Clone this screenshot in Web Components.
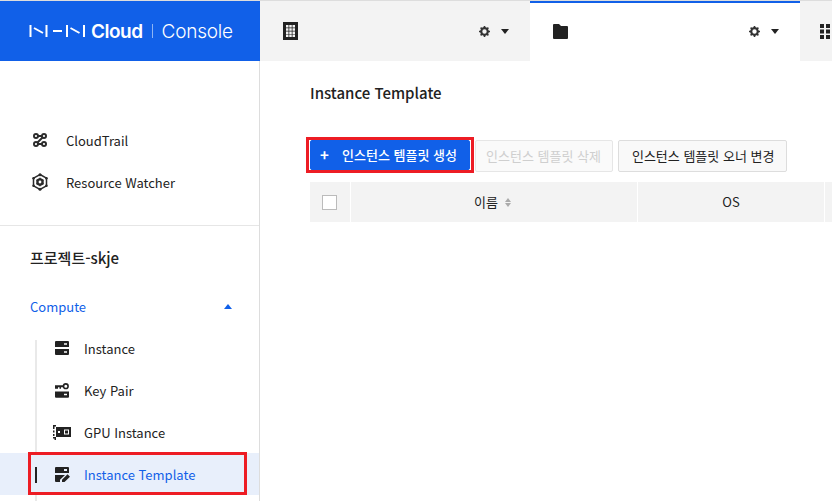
<!DOCTYPE html>
<html lang="ko">
<head>
<meta charset="utf-8">
<title>NHN Cloud Console</title>
<style>
  html, body { margin: 0; height: 100%; overflow: hidden; background: #fff; }
  body { font-family: "Noto Sans CJK KR", "Noto Sans", sans-serif; font-size: 13px; color: #222; }
  console-app { width: 832px; height: 501px; }
</style>
</head>
<body>
<console-app>
  <console-logo slot="logo"></console-logo>
  <console-tab slot="tabs" icon="org"></console-tab>
  <console-tab slot="tabs" icon="folder" active></console-tab>
  <console-tab slot="tabs" icon="grid" bare></console-tab>

  <nav-item slot="nav" icon="trail">CloudTrail</nav-item>
  <nav-item slot="nav" icon="watcher">Resource Watcher</nav-item>
  <nav-project slot="nav">프로젝트-skje</nav-project>
  <nav-group slot="nav" label="Compute">
    <nav-item sub icon="server">Instance</nav-item>
    <nav-item sub icon="key">Key Pair</nav-item>
    <nav-item sub icon="gpu">GPU Instance</nav-item>
    <nav-item sub active marked icon="template">Instance Template</nav-item>
  </nav-group>

  <page-title slot="main">Instance Template</page-title>
  <tool-bar slot="main">
    <ui-button variant="primary" marked>인스턴스 템플릿 생성</ui-button>
    <ui-button disabled>인스턴스 템플릿 삭제</ui-button>
    <ui-button>인스턴스 템플릿 오너 변경</ui-button>
  </tool-bar>
  <table-head slot="main"></table-head>
</console-app>

<script>
// Inline svg icons, all drawn on their own small viewBox
const ICONS = {
  org: '<svg width="15" height="18" viewBox="0 0 15 18"><path fill="#222" fill-rule="evenodd" d="M0 0h15v18H0z M3 3v2.500h2.500V3z M6.250 3v2.500h2.500V3z M9.500 3v2.500H12V3z M3 6.200v2.500h2.500V6.200z M6.250 6.200v2.500h2.500V6.200z M9.500 6.200v2.500H12V6.200z M3 9.400v2.500h2.500V9.400z M6.250 9.400v2.500h2.500V9.400z M9.500 9.400v2.500H12V9.400z M3 12.600v2.500h2.500v-2.500z M6.250 12.600v2.500h2.500v-2.500z M9.500 12.600v2.500H12v-2.500z"/></svg>',
  folder: '<svg width="15" height="15" viewBox="0 0 15 15"><path fill="#222" d="M0 1q0-1 1-1h5l2 2h6q1 0 1 1v11q0 1-1 1H1q-1 0-1-1z"/></svg>',
  grid: '<svg width="16" height="15" viewBox="0 0 16 15"><path fill="#222" d="M0 0h4v4H0zM6 0h4v4H6zM12 0h4v4h-4zM0 5.500h4v4H0zM6 5.500h4v4H6zM12 5.500h4v4h-4zM0 11h4v4H0zM6 11h4v4H6zM12 11h4v4h-4z"/></svg>',
  gear: '<svg width="11" height="11" viewBox="0 0 11 11"><circle cx="5.500" cy="5.500" r="3.300" fill="none" stroke="#333" stroke-width="2.200"/><path stroke="#333" stroke-width="1.600" d="M5.500 0v2M5.500 9v2M0 5.500h2M9 5.500h2M1.600 1.600l1.400 1.400M8 8l1.400 1.400M9.400 1.600L8 3M3 8L1.600 9.400"/></svg>',
  trail: '<svg width="14" height="14" viewBox="0 0 14 14"><g fill="none" stroke="#2b2b2b" stroke-width="1.900"><circle cx="3" cy="3" r="2.050"/><circle cx="11" cy="3" r="2.050"/><circle cx="3" cy="11" r="2.050"/><circle cx="11" cy="11" r="2.050"/><path d="M5 3h4M5 11h4M9.500 4.500l-5 5"/></g></svg>',
  watcher: '<svg width="16" height="18" viewBox="0 0 16 18"><path fill="none" stroke="#2b2b2b" stroke-width="1.500" d="M8 1.500l6.500 3.700v7.600L8 16.500l-6.500-3.700V5.200z"/><circle cx="8" cy="1.800" r="1.500" fill="#2b2b2b"/><circle cx="8" cy="16.200" r="1.500" fill="#2b2b2b"/><circle cx="1.600" cy="5.200" r="1.300" fill="#2b2b2b"/><circle cx="14.400" cy="5.200" r="1.300" fill="#2b2b2b"/><circle cx="1.600" cy="12.800" r="1.300" fill="#2b2b2b"/><circle cx="14.400" cy="12.800" r="1.300" fill="#2b2b2b"/><circle cx="8" cy="9" r="2.600" fill="none" stroke="#2b2b2b" stroke-width="2.400"/><path stroke="#2b2b2b" stroke-width="1.500" d="M8 4.800v1.700M8 11.500v1.700M4.400 6.900l1.400.8M10.200 10.300l1.400.8M11.600 6.900l-1.400.8M5.800 10.300l-1.400.8"/></svg>',
  server: '<svg width="14" height="14" viewBox="0 0 14 14"><path fill="#222" fill-rule="evenodd" d="M0 1q0-1 1-1h12q1 0 1 1v5H0z M9 2.200v1.600h3V2.200z M0 8h14v5q0 1-1 1H1q-1 0-1-1z M9 10.200v1.600h3v-1.600z"/></svg>',
  key: '<svg width="14" height="15" viewBox="0 0 14 15"><circle cx="10.800" cy="3.200" r="2.300" fill="none" stroke="#222" stroke-width="1.600"/><path fill="#222" d="M0 2.300h8v2H6v1.500H4.500V4.300H3v1.500H0z"/><path fill="#222" fill-rule="evenodd" d="M0 8.500h14v5.300q0 1-1 1H1q-1 0-1-1z M9 10.700v1.600h3v-1.600z"/></svg>',
  gpu: '<svg width="18" height="15" viewBox="0 0 18 15"><path fill="#222" fill-rule="evenodd" d="M3 2h15v10H3z M11 4.500v5h5v-5z M5 6v2h2V6z"/><path fill="#222" d="M0 0h3v1.500H1.500V4H0zM0 5.500h1.500v2H0zM0 9h1.500v2H0zM0 12h3v3H1.500v-1.500H0zM12 5.500h3v3h-3z"/></svg>',
  template: '<svg width="16" height="15" viewBox="0 0 16 15"><path fill="#222" fill-rule="evenodd" d="M0 1q0-1 1-1h12q1 0 1 1v5H0z M9 2v2h3V2z"/><path fill="#222" d="M0 8h10L5 12.700V15H1q-1 0-1-1zM7 15v-2.200l5.500-5.500 2.500 2.500L9.500 15z"/></svg>'
};

class ConsoleApp extends HTMLElement {
  constructor() {
    super();
    this.attachShadow({ mode: 'open' });
    this.shadowRoot.innerHTML = `
      <style>
        :host { display: grid; grid-template-columns: 260px 1fr; grid-template-rows: 60px 1fr; overflow: hidden; border-top: 1px solid #ddd; box-sizing: border-box; }
        .tabs { display: flex; background: #f3f3f3; overflow: hidden; min-width: 0; }
        .side { border-right: 1px solid #ddd; overflow: hidden; padding-top: 58px; box-sizing: border-box; }
        .main { padding: 20px 0 0 50px; overflow: hidden; min-width: 0; }
      </style>
      <slot name="logo"></slot>
      <div class="tabs"><slot name="tabs"></slot></div>
      <div class="side"><slot name="nav"></slot></div>
      <div class="main"><slot name="main"></slot></div>
    `;
  }
}

class ConsoleLogo extends HTMLElement {
  constructor() {
    super();
    this.attachShadow({ mode: 'open' });
    this.shadowRoot.innerHTML = `
      <style>
        :host { display: flex; align-items: center; background: #1160e8; color: #fff; padding-left: 29px; }
        svg { display: block; margin-right: 5px; }
        .brand { font-family: Inter, sans-serif; font-size: 19px; font-weight: 600; letter-spacing: -0.5px; }
        .sep { width: 1px; height: 14px; background: #8db4f4; margin: 0 9px; }
        .name { font-family: Inter, sans-serif; font-size: 19px; font-weight: 300; letter-spacing: -0.2px; }
      </style>
      <svg width="57" height="14" viewBox="0 0 57 14" fill="none" stroke="#fff" stroke-width="2">
        <path d="M1.500 1v12M5 4l9 5M17.500 1v12M24 7h9M38 1v12M41.500 4l9 5M55 1v12"/>
      </svg>
      <span class="brand">Cloud</span><span class="sep"></span><span class="name">Console</span>
    `;
  }
}

class ConsoleTab extends HTMLElement {
  constructor() {
    super();
    this.attachShadow({ mode: 'open' });
    const icon = ICONS[this.getAttribute('icon')];
    const tools = this.hasAttribute('bare') ? '' : `
      <span class="tools">${ICONS.gear}<i class="caret"></i></span>`;
    this.shadowRoot.innerHTML = `
      <style>
        :host { display: flex; flex: none; width: 270px; box-sizing: border-box; align-items: center; justify-content: space-between; padding: 0 21px 2px 23px; height: 60px; border-top: 2px solid transparent; }
        :host([active]) { background: #fff; border-top-color: #1160e8; }
        :host([bare]) { width: auto; padding: 0 0 2px 20px; }
        svg { display: block; }
        .tools { display: flex; align-items: center; gap: 11px; }
        .caret { width: 0; height: 0; border: 4px solid transparent; border-top: 5px solid #222; border-bottom: 0; }
      </style>
      ${icon}${tools}
    `;
  }
}

class NavItem extends HTMLElement {
  constructor() {
    super();
    this.attachShadow({ mode: 'open' });
    const mark = this.hasAttribute('marked') ? '<span class="mark"></span>' : '';
    this.shadowRoot.innerHTML = `
      <style>
        :host { display: flex; align-items: center; position: relative; height: 42px; padding-left: 33px; font-size: 13px; color: #222; }
        :host([sub]) { padding-left: 55px; }
        .ico { width: 33px; flex: none; display: flex; align-items: center; }
        :host([sub]) .ico { width: 29px; }
        :host([icon=gpu]) svg { margin-left: -2px; }
        :host([icon=watcher]) svg { margin-left: -1px; }
        :host([active]) { background: #e8effb; color: #1160e8; }
        :host([active])::before { content: ""; position: absolute; left: 35px; top: 14px; height: 16px; width: 2px; background: #222; }
        svg { display: block; }
        .mark { position: absolute; left: 28px; right: 12px; top: -1px; bottom: 0; border: 3px solid #ed1c24; pointer-events: none; }
      </style>
      <span class="ico">${ICONS[this.getAttribute('icon')]}</span><slot></slot>${mark}
    `;
  }
}

class NavProject extends HTMLElement {
  constructor() {
    super();
    this.attachShadow({ mode: 'open' });
    this.shadowRoot.innerHTML = `
      <style>
        :host { display: block; margin-top: 22px; border-top: 1px solid #e6e6e6; padding: 20px 0 0 30px; height: 32px; line-height: 24px; font-size: 15px; font-weight: 500; color: #222; }
      </style>
      <slot></slot>
    `;
  }
}

class NavGroup extends HTMLElement {
  constructor() {
    super();
    this.attachShadow({ mode: 'open' });
    this.shadowRoot.innerHTML = `
      <style>
        :host { display: block; margin-top: 7px; }
        .head { display: flex; align-items: center; justify-content: space-between; height: 42px; padding: 0 27px 0 30px; font-size: 13px; color: #1160e8; }
        .caret { width: 0; height: 0; border: 4px solid transparent; border-bottom: 5px solid #1160e8; border-top: 0; }
        .list { position: relative; }
        .list::before { content: ""; position: absolute; left: 35px; top: 13px; bottom: -10px; width: 2px; background: #e9e9e9; }
      </style>
      <div class="head"><span>${this.getAttribute('label')}</span><i class="caret"></i></div>
      <div class="list"><slot></slot></div>
    `;
  }
}

class PageTitle extends HTMLElement {
  constructor() {
    super();
    this.attachShadow({ mode: 'open' });
    this.shadowRoot.innerHTML = `
      <style>
        :host { display: block; height: 24px; line-height: 24px; font-size: 15px; font-weight: 500; color: #222; }
      </style>
      <slot></slot>
    `;
  }
}

class ToolBar extends HTMLElement {
  constructor() {
    super();
    this.attachShadow({ mode: 'open' });
    this.shadowRoot.innerHTML = `
      <style>
        :host { display: flex; align-items: flex-start; gap: 5px; margin-top: 35px; width: 522px; height: 32px; }
      </style>
      <slot></slot>
    `;
  }
}

class UiButton extends HTMLElement {
  constructor() {
    super();
    this.attachShadow({ mode: 'open' });
    const primary = this.getAttribute('variant') === 'primary';
    this.shadowRoot.innerHTML = `
      <style>
        :host { display: inline-flex; flex: none; position: relative; align-items: center; height: 32px; box-sizing: border-box; padding: 0 12px 2px 13px; white-space: nowrap; font-size: 13px; color: #222; background: #f9f9f9; border: 1px solid #ddd; border-radius: 2px; }
        :host([disabled]) { color: #cfcfcf; border-color: #e6e6e6; background: #fafafa; padding: 0 11px 2px 10px; }
        :host([variant=primary]) { background: #1160e8; border-color: #1160e8; color: #fff; font-weight: 500; padding: 0 0 1px 9px; height: 30px; width: 160px; }
        .plus { width: 22px; flex: none; font-size: 15px; line-height: 1; font-weight: 700; }
        .mark { position: absolute; left: -5px; right: -5px; top: -4px; bottom: -4px; border: 3px solid #ed1c24; }
      </style>
      ${primary ? '<span class="plus">+</span>' : ''}<slot></slot>${this.hasAttribute('marked') ? '<span class="mark"></span>' : ''}
    `;
  }
}

class TableHead extends HTMLElement {
  constructor() {
    super();
    this.attachShadow({ mode: 'open' });
    this.shadowRoot.innerHTML = `
      <style>
        :host { display: grid; grid-template-columns: 40px 286px 186px 60px; gap: 1px; margin-top: 10px; height: 40px; font-size: 13px; color: #222; width: 575px; }
        .cell { background: #f3f3f3; display: flex; align-items: center; justify-content: center; gap: 7px; padding-bottom: 2px; box-sizing: border-box; }
        .cell.name { padding-right: 3px; }
        .check { width: 15px; height: 15px; box-sizing: border-box; border: 1px solid #bbb; background: #fff; margin: 2px 0 0 -1px; }
        .sort { display: flex; flex-direction: column; gap: 1px; margin-top: 2px; }
        .sort i { width: 0; height: 0; border: 3px solid transparent; }
        .sort i:first-child { border-bottom: 4px solid #aaa; border-top: 0; }
        .sort i:last-child { border-top: 4px solid #aaa; border-bottom: 0; }
      </style>
      <div class="cell"><span class="check"></span></div>
      <div class="cell name">이름 <span class="sort"><i></i><i></i></span></div>
      <div class="cell">OS</div>
      <div class="cell"></div>
    `;
  }
}

customElements.define('console-app', ConsoleApp);
customElements.define('console-logo', ConsoleLogo);
customElements.define('console-tab', ConsoleTab);
customElements.define('nav-item', NavItem);
customElements.define('nav-project', NavProject);
customElements.define('nav-group', NavGroup);
customElements.define('page-title', PageTitle);
customElements.define('tool-bar', ToolBar);
customElements.define('ui-button', UiButton);
customElements.define('table-head', TableHead);
</script>
</body>
</html>
